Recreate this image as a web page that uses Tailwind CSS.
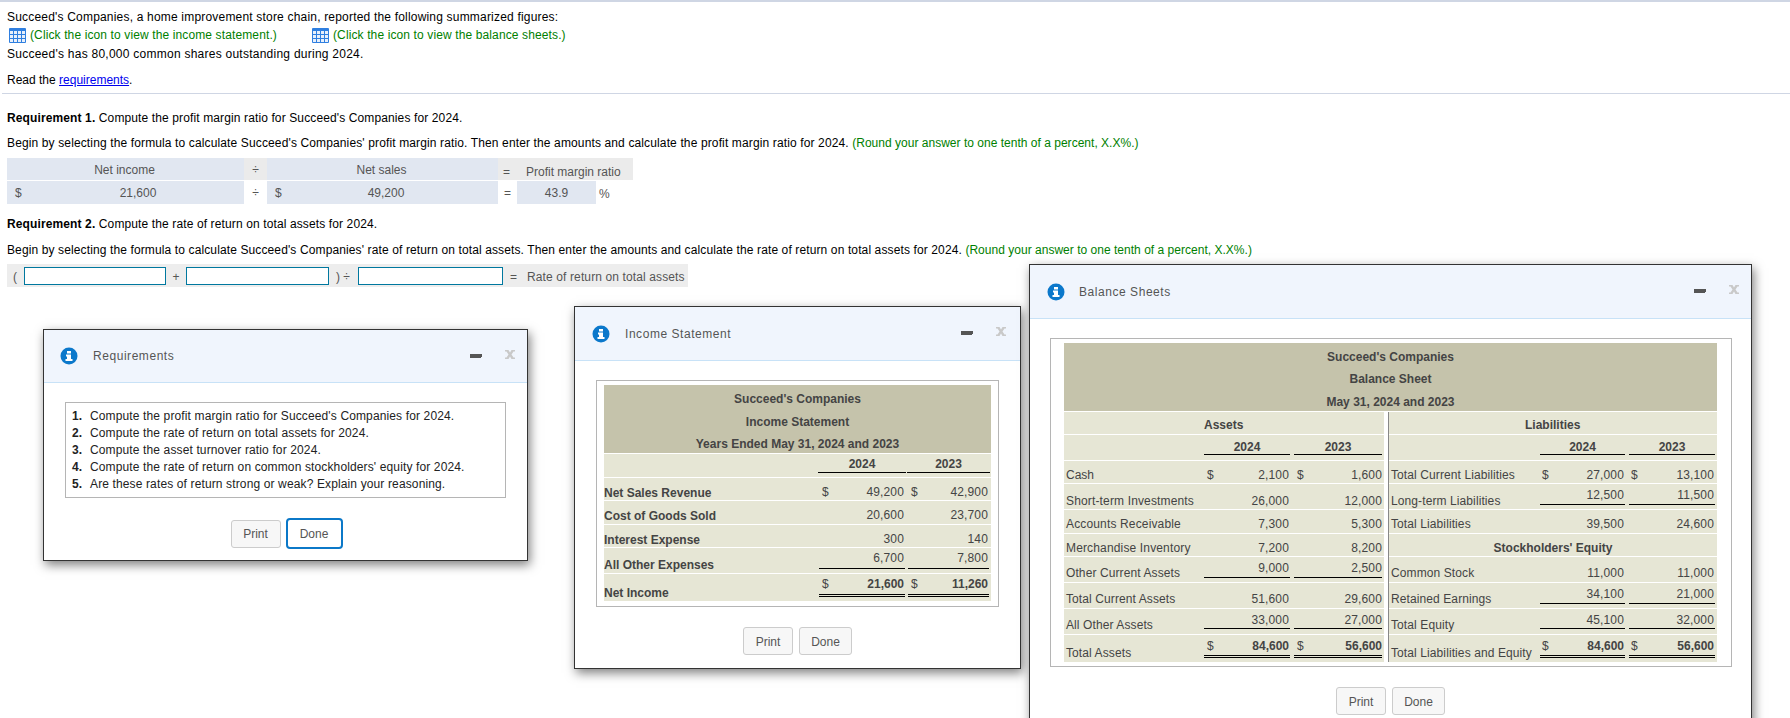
<!DOCTYPE html>
<html lang="en">
<head>
<meta charset="utf-8">
<title>Succeed's Companies</title>
<script src="https://cdn.jsdelivr.net/npm/@tailwindcss/browser@4"></script>
</head>
<body class="bg-white">
<div class="relative w-[1790px] h-[718px] overflow-hidden bg-white text-black text-[12px] leading-[18px] [font-family:'Liberation_Sans',Arial,sans-serif]">
  <div class="h-[2px] bg-[#cfd6e4]"></div>
  <div class="pl-[7px] pt-[6px]">
    <p class="tracking-[0.19px]">Succeed's Companies, a home improvement store chain, reported the following summarized figures:</p>
    <div class="flex items-center h-[18px] text-[#008000] tracking-[0.12px]">
      <svg class="ml-[2px] mr-[4px] w-[17px] h-[15px]" viewBox="0 0 17 15"><rect width="17" height="15" rx="1" fill="#2f7fe0"/><path d="M1 3h3v3H1zM5 3h3v3H5zM9 3h3v3H9zM13 3h3v3h-3zM1 7h3v3H1zM5 7h3v3H5zM9 7h3v3H9zM13 7h3v3h-3zM1 11h3v3H1zM5 11h3v3H5zM9 11h3v3H9zM13 11h3v3h-3z" fill="#e8f0fb"/></svg>
      <span class="w-[282px]">(Click the icon to view the income statement.)</span>
      <svg class="mr-[4px] w-[17px] h-[15px]" viewBox="0 0 17 15"><rect width="17" height="15" rx="1" fill="#2f7fe0"/><path d="M1 3h3v3H1zM5 3h3v3H5zM9 3h3v3H9zM13 3h3v3h-3zM1 7h3v3H1zM5 7h3v3H5zM9 7h3v3H9zM13 7h3v3h-3zM1 11h3v3H1zM5 11h3v3H5zM9 11h3v3H9zM13 11h3v3h-3z" fill="#e8f0fb"/></svg>
      <span>(Click the icon to view the balance sheets.)</span>
    </div>
    <p class="mt-[1px] tracking-[0.25px]">Succeed's has 80,000 common shares outstanding during 2024.</p>
    <p class="mt-[8px]">Read the <a class="text-[#0000ee] underline" href="#">requirements</a>.</p>
  </div>
  <div class="ml-[2px] mt-[4px] h-[1px] bg-[#cfd6e4]"></div>
  <div class="pl-[7px]">
    <p class="mt-[15px] tracking-[0.12px]"><b>Requirement 1.</b> Compute the profit margin ratio for Succeed's Companies for 2024.</p>
    <p class="mt-[7px] tracking-[0.13px]">Begin by selecting the formula to calculate Succeed's Companies' profit margin ratio. Then enter the amounts and calculate the profit margin ratio for 2024. <span class="text-[#008000] tracking-[0.015px]">(Round your answer to one tenth of a percent, X.X%.)</span></p>
    <div class="mt-[6px] flex h-[22px] text-[#555] items-center text-center">
      <div class="w-[237px] h-full bg-[#e1e7f1] pr-[2px] pt-[1px] leading-[22px]">Net income</div>
      <div class="w-[23px] h-full bg-[#ebebeb] pt-[1px] leading-[22px]">÷</div>
      <div class="w-[231px] h-full bg-[#e1e7f1] pr-[2px] pt-[1px] leading-[22px]">Net sales</div>
      <div class="w-[135px] h-full bg-[#ebebeb] flex pt-[5px] pl-[5px]"><span class="w-[23px] text-left">=</span><span>Profit margin ratio</span></div>
    </div>
    <div class="mt-[1px] flex h-[23px] text-[#555] leading-[23px] text-center">
      <div class="w-[237px] bg-[#e1e7f1] flex pl-[8px] pt-[1px]"><span>$</span><span class="ml-[98px]">21,600</span></div>
      <div class="w-[23px] pt-[1px]">÷</div>
      <div class="w-[231px] bg-[#e1e7f1] flex pl-[8px] pt-[1px]"><span>$</span><span class="ml-[86px]">49,200</span></div>
      <div class="w-[19px] pt-[1px]">=</div>
      <div class="w-[79px] bg-[#e1e7f1] pt-[1px]">43.9</div>
      <div class="ml-[3px] pt-[2px]">%</div>
    </div>
    <p class="mt-[11px] tracking-[0.12px]"><b>Requirement 2.</b> Compute the rate of return on total assets for 2024.</p>
    <p class="mt-[8px] tracking-[0.12px]">Begin by selecting the formula to calculate Succeed's Companies' rate of return on total assets. Then enter the amounts and calculate the rate of return on total assets for 2024. <span class="text-[#008000] tracking-[0.02px]">(Round your answer to one tenth of a percent, X.X%.)</span></p>
    <div class="mt-[5px] w-[681px] h-[23px] bg-[#ededed] flex items-center text-[#555]">
      <span class="w-[17px] pl-[6px] pt-[3px]">(</span>
      <div class="w-[142px] h-[18px] bg-white border border-[#00789f]"></div>
      <span class="w-[20px] text-center pt-[3px]">+</span>
      <div class="w-[143px] h-[18px] bg-white border border-[#00789f]"></div>
      <span class="w-[29px] pl-[7px] pt-[3px]">) ÷</span>
      <div class="w-[145px] h-[18px] bg-white border border-[#00789f]"></div>
      <span class="ml-[7px] w-[17px] pt-[3px]">=</span>
      <span class="pt-[3px] tracking-[0.12px]">Rate of return on total assets</span>
    </div>
  </div>

  <!-- Requirements window -->
  <section class="absolute left-[43px] top-[329px] w-[485px] h-[232px] bg-white border border-[#333] shadow-[2px_4px_10px_rgba(0,0,0,0.5)]">
    <header class="h-[53px] bg-[#f0f5fd] border-b border-[#c8e2f7] flex items-center pl-[16px] pr-[12px] text-[#555]">
      <svg class="w-[18px] h-[18px]" viewBox="0 0 18 18"><circle cx="9" cy="9" r="8.5" fill="#0b78cb"/><path d="M7 4h4v2.5H7zM6 7.500h5V12h1.500v2h-7v-2H7V9.500H6z" fill="#fff"/></svg>
      <span class="ml-[15px] tracking-[0.55px]">Requirements</span>
      <svg class="ml-auto w-[12px] h-[5px]" viewBox="0 0 12 5"><path d="M0 0h12v3h-1v1H0z" fill="#555"/></svg>
      <svg class="ml-[23px] mb-[4px] w-[10px] h-[9px]" viewBox="0 0 10 9"><path d="M0 0h3.500l1.500 2.500L6.500 0H10v1.500H8.500L6.500 4.500l2 3H10V9H6.500L5 6.500 3.500 9H0V7.500h1.500l2-3-2-3H0z" fill="#c9c9c9"/></svg>
    </header>
    <div class="ml-[21px] mt-[19px] w-[441px] h-[96px] border border-[#b5b5b5] pl-[6px] pt-[5px] text-[#222] leading-[17px] tracking-[0.13px]">
      <div class="flex"><b class="w-[18px]">1.</b><span>Compute the profit margin ratio for Succeed's Companies for 2024.</span></div>
      <div class="flex"><b class="w-[18px]">2.</b><span>Compute the rate of return on total assets for 2024.</span></div>
      <div class="flex"><b class="w-[18px]">3.</b><span>Compute the asset turnover ratio for 2024.</span></div>
      <div class="flex"><b class="w-[18px]">4.</b><span>Compute the rate of return on common stockholders' equity for 2024.</span></div>
      <div class="flex"><b class="w-[18px]">5.</b><span>Are these rates of return strong or weak? Explain your reasoning.</span></div>
    </div>
    <div class="mt-[20px] flex justify-center items-center gap-[5px] text-[#555] pl-[2px]">
      <button class="w-[50px] h-[28px] bg-[#f7f7f7] border border-[#ccc] rounded-[3px]">Print</button>
      <button class="w-[57px] h-[31px] bg-white border-2 border-[#0b78c8] rounded-[4px]">Done</button>
    </div>
  </section>

  <!-- Income statement window -->
  <section class="absolute left-[574px] top-[306px] w-[447px] h-[363px] bg-white border border-[#333] shadow-[2px_4px_10px_rgba(0,0,0,0.5)]">
    <header class="h-[54px] bg-[#f0f5fd] border-b border-[#c8e2f7] flex items-center pl-[17px] pr-[14px] text-[#555]">
      <svg class="w-[18px] h-[18px]" viewBox="0 0 18 18"><circle cx="9" cy="9" r="8.5" fill="#0b78cb"/><path d="M7 4h4v2.5H7zM6 7.500h5V12h1.500v2h-7v-2H7V9.500H6z" fill="#fff"/></svg>
      <span class="ml-[15px] tracking-[0.55px]">Income Statement</span>
      <svg class="ml-auto w-[12px] h-[5px]" viewBox="0 0 12 5"><path d="M0 0h12v3h-1v1H0z" fill="#555"/></svg>
      <svg class="ml-[23px] mb-[4px] w-[10px] h-[9px]" viewBox="0 0 10 9"><path d="M0 0h3.500l1.500 2.500L6.500 0H10v1.500H8.500L6.500 4.500l2 3H10V9H6.500L5 6.500 3.500 9H0V7.500h1.500l2-3-2-3H0z" fill="#c9c9c9"/></svg>
    </header>
    <div class="ml-[21px] mt-[19px] w-[403px] h-[227px] border border-[#b5b5b5] pl-[7px] pt-[4px] text-[#444] leading-[14px]">
      <div class="w-[387px]">
        <div class="h-[68px] bg-[#c5c3ab] font-bold text-center pt-[7px]">
          <div>Succeed's Companies</div><div class="mt-[9px]">Income Statement</div><div class="mt-[8px]">Years Ended May 31, 2024 and 2023</div>
        </div>
        <div class="mt-[1px] h-[23px] bg-[#e6e6d5] grid grid-cols-[214px_90px_83px] font-bold text-center">
          <div></div>
          <div class="self-start mt-[3px] mr-[2px] border-b border-black pb-[1px]">2024</div>
          <div class="self-start mt-[3px] ml-[-1px] mr-[1px] border-b border-black pb-[1px]">2023</div>
        </div>
        <div class="mt-[1px] h-[22px] bg-[#e6e6d5] grid grid-cols-[214px_90px_83px]">
          <div class="mt-[8px] font-bold">Net Sales Revenue</div>
          <div class="self-start mt-[7px] ml-[1px] mr-[3px] pl-[3px] pr-[1px] flex justify-between tracking-[0.15px]"><span>$</span><span>49,200</span></div>
          <div class="self-start mt-[7px] mr-[2px] pl-[3px] pr-[1px] flex justify-between tracking-[0.15px]"><span>$</span><span>42,900</span></div>
        </div>
        <div class="mt-[1px] h-[23px] bg-[#e6e6d5] grid grid-cols-[214px_90px_83px]">
          <div class="mt-[8px] font-bold">Cost of Goods Sold</div>
          <div class="self-start mt-[7px] ml-[1px] mr-[3px] pl-[3px] pr-[1px] flex justify-end tracking-[0.15px]"><span>20,600</span></div>
          <div class="self-start mt-[7px] mr-[2px] pl-[3px] pr-[1px] flex justify-end tracking-[0.15px]"><span>23,700</span></div>
        </div>
        <div class="mt-[1px] h-[22px] bg-[#e6e6d5] grid grid-cols-[214px_90px_83px]">
          <div class="mt-[8px] font-bold">Interest Expense</div>
          <div class="self-start mt-[7px] ml-[1px] mr-[3px] pl-[3px] pr-[1px] flex justify-end tracking-[0.15px]"><span>300</span></div>
          <div class="self-start mt-[7px] mr-[2px] pl-[3px] pr-[1px] flex justify-end tracking-[0.15px]"><span>140</span></div>
        </div>
        <div class="mt-[1px] h-[25px] bg-[#e6e6d5] grid grid-cols-[214px_90px_83px]">
          <div class="mt-[10px] font-bold">All Other Expenses</div>
          <div class="self-start mt-[3px] ml-[1px] mr-[3px] pl-[3px] pr-[1px] pb-[3px] border-b border-black flex justify-end tracking-[0.15px]"><span>6,700</span></div>
          <div class="self-start mt-[3px] mr-[2px] pl-[3px] pr-[1px] pb-[3px] border-b border-black flex justify-end tracking-[0.15px]"><span>7,800</span></div>
        </div>
        <div class="mt-[1px] h-[27px] bg-[#e6e6d5] grid grid-cols-[214px_90px_83px]">
          <div class="mt-[12px] font-bold">Net Income</div>
          <div class="self-start mt-[3px] ml-[1px] mr-[3px] pl-[3px] pr-[1px] pb-[3px] border-b-[3px] border-double border-black flex justify-between"><span>$</span><b>21,600</b></div>
          <div class="self-start mt-[3px] mr-[2px] pl-[3px] pr-[1px] pb-[3px] border-b-[3px] border-double border-black flex justify-between"><span>$</span><b>11,260</b></div>
        </div>
      </div>
    </div>
    <div class="mt-[20px] flex justify-center gap-[6px] text-[#555]">
      <button class="w-[50px] h-[28px] bg-[#f7f7f7] border border-[#ccc] rounded-[3px] pt-[1px]">Print</button>
      <button class="w-[53px] h-[28px] bg-[#f7f7f7] border border-[#ccc] rounded-[3px] pt-[1px]">Done</button>
    </div>
  </section>

  <!-- Balance sheets window -->
  <section class="absolute left-[1029px] top-[264px] w-[723px] h-[500px] bg-white border border-[#333] shadow-[2px_4px_10px_rgba(0,0,0,0.5)]">
    <header class="h-[54px] bg-[#f0f5fd] border-b border-[#c8e2f7] flex items-center pl-[17px] pr-[12px] text-[#555]">
      <svg class="w-[18px] h-[18px]" viewBox="0 0 18 18"><circle cx="9" cy="9" r="8.5" fill="#0b78cb"/><path d="M7 4h4v2.5H7zM6 7.500h5V12h1.500v2h-7v-2H7V9.500H6z" fill="#fff"/></svg>
      <span class="ml-[14px] tracking-[0.55px]">Balance Sheets</span>
      <svg class="ml-auto w-[12px] h-[5px]" viewBox="0 0 12 5"><path d="M0 0h12v3h-1v1H0z" fill="#555"/></svg>
      <svg class="ml-[23px] mb-[4px] w-[10px] h-[9px]" viewBox="0 0 10 9"><path d="M0 0h3.500l1.500 2.500L6.500 0H10v1.500H8.500L6.500 4.500l2 3H10V9H6.500L5 6.500 3.500 9H0V7.500h1.500l2-3-2-3H0z" fill="#c9c9c9"/></svg>
    </header>
    <div class="ml-[20px] mt-[19px] w-[682px] h-[329px] border border-[#b5b5b5] pl-[13px] pt-[4px] text-[#444] leading-[14px]">
      <div class="w-[653px]">
        <div class="h-[68px] bg-[#c5c3ab] font-bold text-center pt-[7px]">
          <div>Succeed's Companies</div><div class="mt-[8px]">Balance Sheet</div><div class="mt-[9px]">May 31, 2024 and 2023</div>
        </div>
        <div class="mt-[1px] flex">
          <!-- Assets -->
          <div class="w-[320px]">
            <div class="h-[22px] bg-[#e6e6d5] pl-[140px] pt-[6px] font-bold">Assets</div>
            <div class="mt-[1px] h-[25px] bg-[#e6e6d5] grid grid-cols-[140px_90px_90px] font-bold text-center">
              <div></div>
              <div class="self-start mt-[5px] mr-[4px] border-b border-black">2024</div>
              <div class="self-start mt-[5px] mr-[2px] border-b border-black">2023</div>
            </div>
            <div class="mt-[1px] h-[22px] bg-[#e6e6d5] grid grid-cols-[140px_90px_90px]">
              <div class="mt-[7px] pl-[2px]">Cash</div>
              <div class="self-start mt-[7px] mr-[4px] pl-[3px] pr-[1px] flex justify-between tracking-[0.15px]"><span>$</span><span>2,100</span></div>
              <div class="self-start mt-[7px] mr-[2px] pl-[3px] flex justify-between tracking-[0.15px]"><span>$</span><span>1,600</span></div>
            </div>
            <div class="mt-[1px] h-[25px] bg-[#e6e6d5] grid grid-cols-[140px_90px_90px]">
              <div class="mt-[10px] pl-[2px] tracking-[0.15px]">Short-term Investments</div>
              <div class="self-start mt-[10px] mr-[4px] pr-[1px] text-right tracking-[0.15px]">26,000</div>
              <div class="self-start mt-[10px] mr-[2px] text-right tracking-[0.15px]">12,000</div>
            </div>
            <div class="mt-[1px] h-[23px] bg-[#e6e6d5] grid grid-cols-[140px_90px_90px]">
              <div class="mt-[7px] pl-[2px] tracking-[0.15px]">Accounts Receivable</div>
              <div class="self-start mt-[7px] mr-[4px] pr-[1px] text-right tracking-[0.15px]">7,300</div>
              <div class="self-start mt-[7px] mr-[2px] text-right tracking-[0.15px]">5,300</div>
            </div>
            <div class="mt-[1px] h-[22px] bg-[#e6e6d5] grid grid-cols-[140px_90px_90px]">
              <div class="mt-[7px] pl-[2px] tracking-[0.15px]">Merchandise Inventory</div>
              <div class="self-start mt-[7px] mr-[4px] pr-[1px] text-right tracking-[0.15px]">7,200</div>
              <div class="self-start mt-[7px] mr-[2px] text-right tracking-[0.15px]">8,200</div>
            </div>
            <div class="mt-[1px] h-[25px] bg-[#e6e6d5] grid grid-cols-[140px_90px_90px]">
              <div class="mt-[9px] pl-[2px] tracking-[0.1px]">Other Current Assets</div>
              <div class="self-start mt-[4px] mr-[4px] pr-[1px] pb-[2px] border-b border-black text-right tracking-[0.15px]">9,000</div>
              <div class="self-start mt-[4px] mr-[2px] pb-[2px] border-b border-black text-right tracking-[0.15px]">2,500</div>
            </div>
            <div class="mt-[1px] h-[25px] bg-[#e6e6d5] grid grid-cols-[140px_90px_90px]">
              <div class="mt-[9px] pl-[2px] tracking-[0.1px]">Total Current Assets</div>
              <div class="self-start mt-[9px] mr-[4px] pr-[1px] text-right tracking-[0.15px]">51,600</div>
              <div class="self-start mt-[9px] mr-[2px] text-right tracking-[0.15px]">29,600</div>
            </div>
            <div class="mt-[1px] h-[25px] bg-[#e6e6d5] grid grid-cols-[140px_90px_90px]">
              <div class="mt-[9px] pl-[2px] tracking-[0.1px]">All Other Assets</div>
              <div class="self-start mt-[4px] mr-[4px] pr-[1px] pb-[1px] border-b border-black text-right tracking-[0.15px]">33,000</div>
              <div class="self-start mt-[4px] mr-[2px] pb-[1px] border-b border-black text-right tracking-[0.15px]">27,000</div>
            </div>
            <div class="mt-[1px] h-[27px] bg-[#e6e6d5] grid grid-cols-[140px_90px_90px]">
              <div class="mt-[11px] pl-[2px] tracking-[0.1px]">Total Assets</div>
              <div class="self-start mt-[4px] mr-[4px] pl-[3px] pr-[1px] pb-[2px] border-b-[3px] border-double border-black flex justify-between"><span>$</span><b>84,600</b></div>
              <div class="self-start mt-[4px] mr-[2px] pl-[3px] pb-[2px] border-b-[3px] border-double border-black flex justify-between"><span>$</span><b>56,600</b></div>
            </div>
          </div>
          <div class="w-[5px] border-r border-[#888]"></div>
          <!-- Liabilities -->
          <div class="w-[328px]">
            <div class="h-[22px] bg-[#e6e6d5] pt-[6px] pl-[136px] font-bold">Liabilities</div>
            <div class="mt-[1px] h-[25px] bg-[#e6e6d5] grid grid-cols-[151px_89px_88px] font-bold text-center">
              <div></div>
              <div class="self-start mt-[5px] mr-[4px] border-b border-black">2024</div>
              <div class="self-start mt-[5px] mr-[2px] border-b border-black">2023</div>
            </div>
            <div class="mt-[1px] h-[22px] bg-[#e6e6d5] grid grid-cols-[151px_89px_88px]">
              <div class="mt-[7px] pl-[2px] tracking-[0.1px]">Total Current Liabilities</div>
              <div class="self-start mt-[7px] mr-[4px] pl-[2px] pr-[1px] flex justify-between tracking-[0.15px]"><span>$</span><span>27,000</span></div>
              <div class="self-start mt-[7px] mr-[2px] pl-[2px] pr-[1px] flex justify-between tracking-[0.15px]"><span>$</span><span>13,100</span></div>
            </div>
            <div class="mt-[1px] h-[25px] bg-[#e6e6d5] grid grid-cols-[151px_89px_88px]">
              <div class="mt-[10px] pl-[2px] tracking-[0.1px]">Long-term Liabilities</div>
              <div class="self-start mt-[4px] mr-[4px] pr-[1px] pb-[2px] border-b border-black text-right tracking-[0.15px]">12,500</div>
              <div class="self-start mt-[4px] mr-[2px] pr-[1px] pb-[2px] border-b border-black text-right tracking-[0.15px]">11,500</div>
            </div>
            <div class="mt-[1px] h-[23px] bg-[#e6e6d5] grid grid-cols-[151px_89px_88px]">
              <div class="mt-[7px] pl-[2px] tracking-[0.1px]">Total Liabilities</div>
              <div class="self-start mt-[7px] mr-[4px] pr-[1px] text-right tracking-[0.15px]">39,500</div>
              <div class="self-start mt-[7px] mr-[2px] pr-[1px] text-right tracking-[0.15px]">24,600</div>
            </div>
            <div class="mt-[1px] h-[22px] bg-[#e6e6d5] pt-[7px] text-center font-bold">Stockholders' Equity</div>
            <div class="mt-[1px] h-[25px] bg-[#e6e6d5] grid grid-cols-[151px_89px_88px]">
              <div class="mt-[9px] pl-[2px] tracking-[0.1px]">Common Stock</div>
              <div class="self-start mt-[9px] mr-[4px] pr-[1px] text-right tracking-[0.15px]">11,000</div>
              <div class="self-start mt-[9px] mr-[2px] pr-[1px] text-right tracking-[0.15px]">11,000</div>
            </div>
            <div class="mt-[1px] h-[25px] bg-[#e6e6d5] grid grid-cols-[151px_89px_88px]">
              <div class="mt-[9px] pl-[2px] tracking-[0.1px]">Retained Earnings</div>
              <div class="self-start mt-[4px] mr-[4px] pr-[1px] pb-[2px] border-b border-black text-right tracking-[0.15px]">34,100</div>
              <div class="self-start mt-[4px] mr-[2px] pr-[1px] pb-[2px] border-b border-black text-right tracking-[0.15px]">21,000</div>
            </div>
            <div class="mt-[1px] h-[25px] bg-[#e6e6d5] grid grid-cols-[151px_89px_88px]">
              <div class="mt-[9px] pl-[2px] tracking-[0.1px]">Total Equity</div>
              <div class="self-start mt-[4px] mr-[4px] pr-[1px] pb-[1px] border-b border-black text-right tracking-[0.15px]">45,100</div>
              <div class="self-start mt-[4px] mr-[2px] pr-[1px] pb-[1px] border-b border-black text-right tracking-[0.15px]">32,000</div>
            </div>
            <div class="mt-[1px] h-[27px] bg-[#e6e6d5] grid grid-cols-[151px_89px_88px]">
              <div class="mt-[11px] pl-[2px] tracking-[0.1px]">Total Liabilities and Equity</div>
              <div class="self-start mt-[4px] mr-[4px] pl-[2px] pr-[1px] pb-[2px] border-b-[3px] border-double border-black flex justify-between"><span>$</span><b>84,600</b></div>
              <div class="self-start mt-[4px] mr-[2px] pl-[2px] pr-[1px] pb-[2px] border-b-[3px] border-double border-black flex justify-between"><span>$</span><b>56,600</b></div>
            </div>
          </div>
        </div>
      </div>
    </div>
    <div class="mt-[20px] flex justify-center gap-[6px] text-[#555]">
      <button class="w-[50px] h-[28px] bg-[#f7f7f7] border border-[#ccc] rounded-[3px] pt-[1px]">Print</button>
      <button class="w-[53px] h-[28px] bg-[#f7f7f7] border border-[#ccc] rounded-[3px] pt-[1px]">Done</button>
    </div>
  </section>
</div>
</body>
</html>
